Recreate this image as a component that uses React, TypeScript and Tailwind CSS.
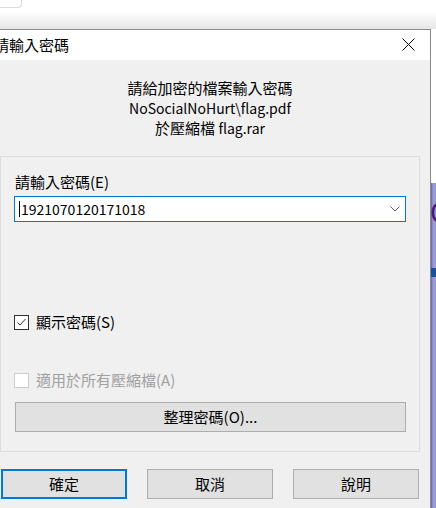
import React from "react";

const font = "font-['Noto_Sans_CJK_TC','Noto_Sans',sans-serif]";

function Check() {
    return (
        <svg width="13" height="13" viewBox="0 0 13 13" className="block">
            <polyline points="2.5,6.5 5,9 10.5,3" fill="none" stroke="#333" strokeWidth="1" />
        </svg>
    );
}

export default function App() {
    return (
        <div className={`w-[436px] h-[508px] overflow-hidden bg-white ${font} text-[15px] text-black`}>
            {/* window behind, top strip */}
            <div className="h-[29px] bg-gradient-to-b from-white from-40% to-[#e6e6e6]">
                <div className="w-[22px] h-[8px] border-r border-b border-[#dcdcdc] rounded-br-sm bg-white"></div>
            </div>

            <div className="flex">
                {/* dialog */}
                <div className="w-[431px] h-[479px] border-t border-r border-[#8a8a8a] flex flex-col shrink-0">
                    <div className="h-[30px] bg-white flex items-center justify-between">
                        <span className="-ml-[6px] leading-[20px]">請輸入密碼</span>
                        <svg width="13" height="13" viewBox="0 0 13 13" className="mr-[15px] mb-[1px]">
                            <path d="M0.5 0.5 L12.5 12.5 M12.5 0.5 L0.5 12.5" stroke="#000" strokeWidth="1" />
                        </svg>
                    </div>

                    <div className="flex-1 bg-[#f0f0f0] pt-[18px]">
                        <div className="w-[420px] text-center leading-[20px]">
                            <p>請給加密的檔案輸入密碼</p>
                            <p className="text-[14px]">NoSocialNoHurt\flag.pdf</p>
                            <p>於壓縮檔 <span className="text-[14px]">flag.rar</span></p>
                        </div>

                        {/* group box */}
                        <div className="mt-[18px] w-[420px] h-[296px] border border-[#dcdcdc] pt-[15px] pb-[19px]">
                            <p className="ml-[14px] leading-[20px]">請輸入密碼(E)</p>
                            <div className="ml-[13px] mt-[4px] w-[392px] h-[26px] border border-[#0078d7] bg-white flex items-center justify-between pl-[4px] pr-[5px]">
                                <span className="border-l border-black pl-[1px] leading-[16px] text-[14px]">1921070120171018</span>
                                <svg width="10" height="6" viewBox="0 0 10 6">
                                    <polyline points="0.5,0.5 5,5 9.5,0.5" fill="none" stroke="#606060" strokeWidth="1" />
                                </svg>
                            </div>

                            <label className="ml-[13px] mt-[90px] flex items-center gap-[7px] h-[20px]">
                                <span className="w-[15px] h-[15px] border border-[#333] bg-white flex items-center justify-center">
                                    <Check />
                                </span>
                                <span>顯示密碼(S)</span>
                            </label>

                            <label className="ml-[13px] mt-[38px] flex items-center gap-[7px] h-[20px] text-[#a0a0a0]">
                                <span className="w-[15px] h-[15px] border border-[#cccccc] bg-white"></span>
                                <span>適用於所有壓縮檔(A)</span>
                            </label>

                            <button className="ml-[14px] mt-[12px] w-[391px] h-[30px] border border-[#adadad] bg-[#e1e1e1] flex items-center justify-center">
                                整理密碼(O)...
                            </button>
                        </div>

                        <div className="mt-[17px] flex gap-[20px] pl-[1px]">
                            <button className="w-[126px] h-[30px] border-2 border-[#0078d7] bg-[#e1e1e1] flex items-center justify-center">確定</button>
                            <button className="w-[126px] h-[30px] border border-[#adadad] bg-[#e1e1e1] flex items-center justify-center">取消</button>
                            <button className="w-[126px] h-[30px] border border-[#adadad] bg-[#e1e1e1] flex items-center justify-center">說明</button>
                        </div>
                    </div>
                </div>

                {/* window behind, right edge */}
                <div className="flex-1 flex flex-col overflow-hidden">
                    <div className="h-[154px] bg-white"></div>
                    <div className="flex-1 bg-gradient-to-r from-[#7070b8] from-10% to-[#9a9ad8] to-40% overflow-hidden">
                        <div className="mt-[14px] h-[28px] text-[28px] leading-[28px] text-[#4a1a7a] -ml-[1px]">C</div>
                        <div className="mt-[43px] h-[9px] bg-[#1f4e9a]"></div>
                    </div>
                </div>
            </div>
        </div>
    );
}
